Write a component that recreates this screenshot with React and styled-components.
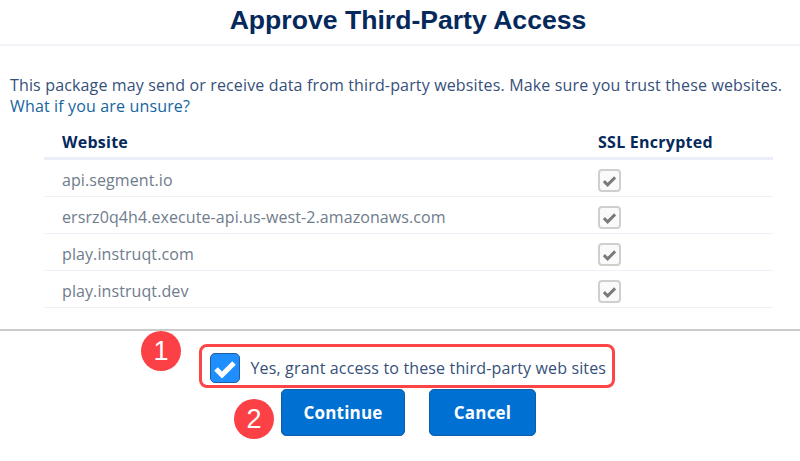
import React from "react";
import styled, { createGlobalStyle } from "styled-components";

const GlobalStyle = createGlobalStyle`
    html, body {
        margin: 0;
        padding: 0;
        background: #fff;
    }
`;

const Page = styled.div`
    position: relative;
    width: 800px;
    height: 461px;
    overflow: hidden;
    font-family: "Open Sans", "Noto Sans", sans-serif;
    font-size: 16px;
    color: #36507a;
`;

const Header = styled.header`
    box-sizing: border-box;
    height: 46px;
    padding: 0 0 4px 16px;
    border-bottom: 2px solid #f0f4f9;
    display: flex;
    justify-content: center;
    align-items: center;
`;

const Title = styled.h1`
    margin: 0;
    font-family: "Liberation Sans", Arial, sans-serif;
    font-size: 26.6px;
    font-weight: 700;
    color: #06295c;
`;

const Intro = styled.p`
    margin: 0;
    padding: 29px 0 0 10px;
    line-height: 21px;
    white-space: nowrap;
    letter-spacing: 0.15px;
`;

const HelpLink = styled.a`
    color: #16659f;
    display: block;
`;

const Table = styled.div`
    margin: 9px 27px 0 44px;
`;

const HeadRow = styled.div`
    display: grid;
    grid-template-columns: 536px 1fr;
    align-items: center;
    height: 31px;
    padding-left: 18px;
    border-bottom: 3px solid #e8eff7;
    font-weight: 700;
    color: #06295c;
    letter-spacing: 0.25px;
`;

const Row = styled.div`
    display: grid;
    grid-template-columns: 536px 1fr;
    align-items: center;
    height: 32px;
    padding: 4px 0 0 18px;
    border-bottom: 1px solid #edf2f8;
    color: #6f7c8c;
    letter-spacing: 0.09px;
`;

const ReadOnlyBox = styled.span`
    box-sizing: border-box;
    width: 23px;
    height: 23px;
    border: 2px solid #cfcfcf;
    border-radius: 4px;
    background: #fafafa;
    display: flex;
    align-items: center;
    justify-content: center;
`;

const Footer = styled.footer`
    margin-top: 21px;
    border-top: 2px solid #cbcbcb;
    padding-top: 13px;
    display: flex;
    flex-direction: column;
    align-items: center;
`;

const Consent = styled.label`
    box-sizing: border-box;
    width: 416px;
    height: 44px;
    margin-left: 13px;
    border: 3px solid #fb4547;
    border-radius: 8px;
    padding: 3px 0 0 8px;
    display: flex;
    align-items: center;
    gap: 11px;
    white-space: nowrap;
    letter-spacing: 0.15px;
`;

const CheckedBox = styled.span`
    box-sizing: border-box;
    width: 30px;
    height: 30px;
    border: 1px solid #1f5f9e;
    border-radius: 5px;
    background: #1f8fff;
    display: flex;
    align-items: center;
    justify-content: center;
`;

const Buttons = styled.div`
    margin: 1px 0 0 17px;
    display: flex;
    gap: 24px;
`;

const Button = styled.button`
    box-sizing: border-box;
    height: 47px;
    width: ${(p) => p.$width}px;
    border: 1px solid #0f5ca8;
    border-radius: 5px;
    background: #0070d2;
    color: #fff;
    font-family: inherit;
    font-size: 17px;
    font-weight: 700;
    letter-spacing: 0.2px;
`;

const Badge = styled.span`
    position: absolute;
    left: ${(p) => p.$x}px;
    top: ${(p) => p.$y}px;
    width: 40px;
    height: 40px;
    border-radius: 50%;
    background: #fb4145;
    color: #fff;
    font-family: "Liberation Sans", Arial, sans-serif;
    font-size: 27px;
    display: flex;
    align-items: center;
    justify-content: center;
`;

const Tick = ({ size, color, width }) => (
    <svg width={size} height={size} viewBox="0 0 24 24" fill="none">
        <path d="M3 13l6 6L21 7" stroke={color} strokeWidth={width} />
    </svg>
);

const sites = [
    "api.segment.io",
    "ersrz0q4h4.execute-api.us-west-2.amazonaws.com",
    "play.instruqt.com",
    "play.instruqt.dev",
];

export default function App() {
    return (
        <Page>
            <GlobalStyle />
            <Header>
                <Title>Approve Third-Party Access</Title>
            </Header>
            <Intro>
                This package may send or receive data from third-party websites. Make sure you trust these websites.
                <HelpLink>What if you are unsure?</HelpLink>
            </Intro>
            <Table>
                <HeadRow>
                    <span>Website</span>
                    <span>SSL Encrypted</span>
                </HeadRow>
                {sites.map((site) => (
                    <Row key={site}>
                        <span>{site}</span>
                        <ReadOnlyBox>
                            <Tick size={15} color="#7a7a7a" width={4.6} />
                        </ReadOnlyBox>
                    </Row>
                ))}
            </Table>
            <Footer>
                <Consent>
                    <CheckedBox>
                        <Tick size={24} color="#fff" width={5} />
                    </CheckedBox>
                    Yes, grant access to these third-party web sites
                </Consent>
                <Buttons>
                    <Button $width={124}>Continue</Button>
                    <Button $width={107}>Cancel</Button>
                </Buttons>
            </Footer>
            <Badge $x={141} $y={331}>1</Badge>
            <Badge $x={234} $y={399}>2</Badge>
        </Page>
    );
}
